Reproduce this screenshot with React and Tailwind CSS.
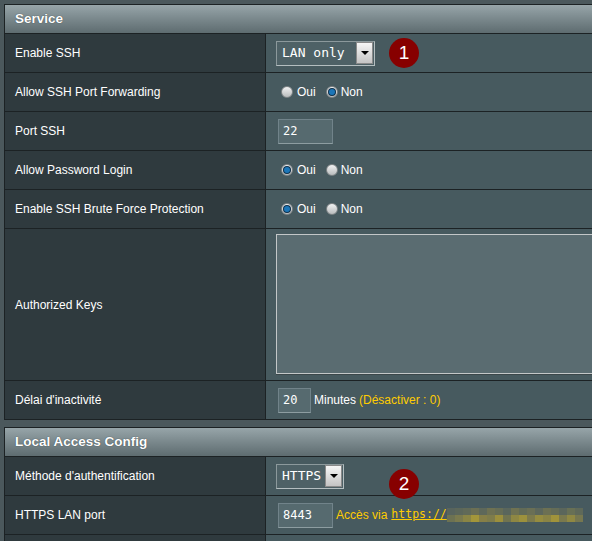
import React from "react";

const sans = { fontFamily: '"Liberation Sans", Arial, sans-serif' };

const Radio = ({ checked }) => (
  <span className="relative inline-flex w-[12px] h-[12px] rounded-full border border-[#7d8385] bg-gradient-to-b from-[#f2f2f2] to-[#b9bcbd] items-center justify-center">
    {checked && (
      <span className="w-[6px] h-[6px] rounded-full bg-[#1c76b8] ring-1 ring-[#0d2f4a]" />
    )}
  </span>
);

const YesNo = ({ value }) => (
  <div className="flex items-center text-[12px] text-white ml-[5px]">
    <Radio checked={value === "oui"} />
    <span className="ml-[4px]">Oui</span>
    <span className="ml-[10px] flex">
      <Radio checked={value === "non"} />
    </span>
    <span className="ml-[3px]">Non</span>
  </div>
);

const Select = ({ label, w }) => (
  <div
    className={`flex items-center justify-between h-[25px] ${w} border border-[#8c999c] border-b-[#b4bec0] border-r-[#b4bec0] bg-[#4e6166] pl-[5px] pr-[1px]`}
  >
    <span className="font-['DejaVu_Sans_Mono',monospace] text-[13px] text-white">{label}</span>
    <span className="flex items-center justify-center w-[17px] h-[22px] border border-[#8a8a8a] bg-gradient-to-b from-[#f6f6f6] to-[#c4c4c4]">
      <span className="w-0 h-0 border-l-[4px] border-r-[4px] border-t-[4px] border-l-transparent border-r-transparent border-t-black" />
    </span>
  </div>
);

const Field = ({ value, w }) => (
  <div
    className={`ml-[2px] h-[25px] ${w} shrink-0 flex items-center pl-[4px] border border-[#71838a] border-b-[#8d9da1] bg-[#566a6f] font-['DejaVu_Sans_Mono',monospace] text-[12px] text-white`}
  >
    {value}
  </div>
);

const Row = ({ label, children, h = "h-[38px]", top = "items-center" }) => (
  <div className="flex border-t border-[#1c2224]">
    <div className={`w-[261px] shrink-0 ${h} flex items-center pl-[10px] bg-[#2f3a3e] text-[12px] text-white border-r border-[#1c2224]`}>
      {label}
    </div>
    <div className={`flex-1 min-w-0 ${h} flex ${top} pl-[10px] bg-[#475a5f]`}>{children}</div>
  </div>
);

const Header = ({ title }) => (
  <div className="h-[28px] flex items-center pl-[10px] bg-gradient-to-b from-[#97a5a9] to-[#5e6c70] text-[13.5px] font-bold text-white [text-shadow:0_0_1px_#2a3438]">
    {title}
  </div>
);

const Badge = ({ n, cls }) => (
  <div className={`absolute ${cls} w-[30px] h-[30px] rounded-full bg-[#870000] flex items-center justify-center text-white text-[19px]`}>
    {n}
  </div>
);

const blurTop = [
  "bg-[#58645d]", "bg-[#5c675a]", "bg-[#616a58]", "bg-[#6b6f54]", "bg-[#5e685a]", "bg-[#6e7152]",
  "bg-[#666d56]", "bg-[#5a665c]", "bg-[#6f7252]", "bg-[#626b57]", "bg-[#6a6f55]", "bg-[#5d675b]",
  "bg-[#6c7053]", "bg-[#646c57]", "bg-[#5b665b]", "bg-[#687055]", "bg-[#5f6959]",
];
const blurBot = [
  "bg-[#6d7252]", "bg-[#7a7a4e]", "bg-[#8a8545]", "bg-[#a3963a]", "bg-[#867f47]", "bg-[#7e7c4b]",
  "bg-[#9b8f3d]", "bg-[#717450]", "bg-[#8e8743]", "bg-[#9c913d]", "bg-[#7c7a4c]", "bg-[#958c40]",
  "bg-[#8a8445]", "bg-[#a0933b]", "bg-[#7a794d]", "bg-[#8f8843]", "bg-[#767750]",
];

export default function App() {
  return (
    <div style={sans} className="relative w-[592px] h-[541px] overflow-hidden bg-[#4b585c] pt-[4px] pl-[4px]">
      {/* Service */}
      <div className="w-[640px] border border-[#1c2224]">
        <Header title="Service" />
        <Row label="Enable SSH">
          <Select label="LAN only" w="w-[99px]" />
        </Row>
        <Row label="Allow SSH Port Forwarding">
          <YesNo value="non" />
        </Row>
        <Row label="Port SSH">
          <Field value="22" w="w-[55px]" />
        </Row>
        <Row label="Allow Password Login">
          <YesNo value="oui" />
        </Row>
        <Row label="Enable SSH Brute Force Protection">
          <YesNo value="oui" />
        </Row>
        <Row label="Authorized Keys" h="h-[151px]" top="items-start">
          <div className="mt-[5px] w-[400px] shrink-0 h-[140px] border border-[#c3c7c8] bg-[#5a6c71] shadow-[0_1px_0_#3b474a]" />
        </Row>
        <Row label="Délai d'inactivité">
          <Field value="20" w="w-[33px]" />
          <span className="ml-[3px] text-[12px] text-white">Minutes</span>
          <span className="ml-[3px] text-[12px] text-[#ffcc00]">(Désactiver : 0)</span>
        </Row>
      </div>

      {/* Local Access Config */}
      <div className="mt-[7px] w-[640px] border border-[#1c2224]">
        <Header title="Local Access Config" />
        <Row label="Méthode d'authentification">
          <Select label="HTTPS" w="w-[68px]" />
        </Row>
        <Row label="HTTPS LAN port">
          <Field value="8443" w="w-[55px]" />
          <span className="ml-[3px] text-[12px] text-[#ffcc00]">Accès via</span>
          <span className="ml-[4px] font-['DejaVu_Sans_Mono',monospace] text-[11.5px] text-[#ffcc00] underline">
            https://
          </span>
          <div className="flex flex-col">
            <div className="flex">
              {blurTop.map((c, i) => (
                <span key={i} className={`w-[8px] h-[7px] ${c}`} />
              ))}
            </div>
            <div className="flex">
              {blurBot.map((c, i) => (
                <span key={i} className={`w-[8px] h-[7px] ${c}`} />
              ))}
            </div>
          </div>
        </Row>
        <Row label="" />
      </div>

      <Badge n="1" cls="left-[389px] top-[38px]" />
      <Badge n="2" cls="left-[389px] top-[469px]" />
    </div>
  );
}
